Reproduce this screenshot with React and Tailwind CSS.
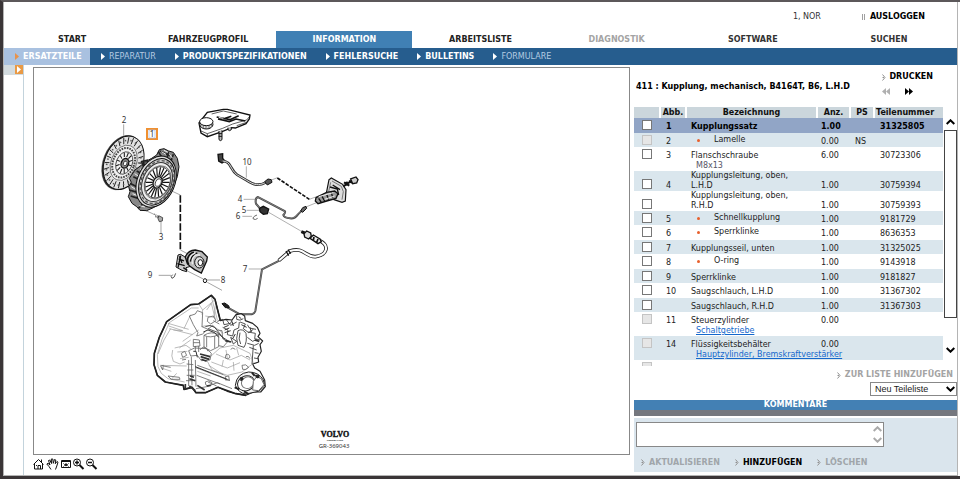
import React from "react";

const TABS = [
  { name: "START", style: "text-[#222222]" },
  { name: "FAHRZEUGPROFIL", style: "text-[#222222]" },
  { name: "INFORMATION", style: "bg-[#4080b4] text-white" },
  { name: "ARBEITSLISTE", style: "text-[#222222]" },
  { name: "DIAGNOSTIK", style: "text-[#a4a4a4]" },
  { name: "SOFTWARE", style: "text-[#333333]" },
  { name: "SUCHEN", style: "text-[#333333]" },
];

const SUBNAV = [
  { name: "REPARATUR", style: "font-normal text-[#b4cbe2]" },
  { name: "PRODUKTSPEZIFIKATIONEN", style: "font-bold text-white" },
  { name: "FEHLERSUCHE", style: "font-bold text-white" },
  { name: "BULLETINS", style: "font-bold text-white" },
  { name: "FORMULARE", style: "font-normal text-[#b4cbe2]" },
];

const PARTS = [
  { no: "1", name: "Kupplungssatz", qty: "1.00", part: "31325805", selected: true },
  { no: "2", name: "Lamelle", sub: true, qty: "0.00", ps: "NS", disabled: true },
  { no: "3", name: "Flanschschraube", note: "M8x13", qty: "6.00", part: "30723306" },
  { no: "4", name: "Kupplungsleitung, oben, L.H.D", wrap: true, qty: "1.00", part: "30759394" },
  { no: "", name: "Kupplungsleitung, oben, R.H.D", wrap: true, qty: "1.00", part: "30759393" },
  { no: "5", name: "Schnellkupplung", sub: true, qty: "1.00", part: "9181729" },
  { no: "6", name: "Sperrklinke", sub: true, qty: "1.00", part: "8636353" },
  { no: "7", name: "Kupplungsseil, unten", qty: "1.00", part: "31325025" },
  { no: "8", name: "O-ring", sub: true, qty: "1.00", part: "9143918" },
  { no: "9", name: "Sperrklinke", qty: "1.00", part: "9181827" },
  { no: "10", name: "Saugschlauch, L.H.D", qty: "1.00", part: "31367302" },
  { no: "", name: "Saugschlauch, R.H.D", qty: "1.00", part: "31367303" },
  { no: "11", name: "Steuerzylinder", link: "Schaltgetriebe", qty: "0.00", disabled: true },
  { no: "14", name: "Flüssigkeitsbehälter", link: "Hauptzylinder, Bremskraftverstärker", qty: "0.00", disabled: true },
  { no: "", name: "", qty: "", disabled: true },
];

function Triangle({ className }) {
  return (
    <svg className={"h-[7px] w-1 shrink-0 " + className} viewBox="0 0 4 7" fill="currentColor" aria-hidden="true">
      <path d="M0 0L4 3.5L0 7Z" />
    </svg>
  );
}

function Marker() {
  return (
    <svg className="h-[7px] w-1 shrink-0 text-[#909090]" viewBox="0 0 4 7" fill="none" stroke="currentColor" aria-hidden="true">
      <path d="M0.5 0.5L3 3.5L0.5 6.5M0.5 3.5H2" />
    </svg>
  );
}

function Chevron({ up, className }) {
  return (
    <svg className={"h-[6px] w-[9px] " + className} viewBox="0 0 9 6" fill="none" stroke="currentColor" strokeWidth="2" aria-hidden="true">
      <path d={up ? "M0.7 5L4.5 1.3L8.3 5" : "M0.7 1L4.5 4.7L8.3 1"} />
    </svg>
  );
}

function Header() {
  return (
    <header>
      <div className="flex h-[29px] items-center justify-end pr-8">
        <span className="text-[#333333]">1, NOR</span>
        <span className="ml-[41px] h-[6px] w-[3px] border-x border-[#a0a0a0]" />
        <button className="ml-[5px] font-bold text-black">AUSLOGGEN</button>
      </div>
      <nav className="grid h-[17px] grid-cols-7">
        {TABS.map((t) => (
          <a key={t.name} href="#" className={"flex items-center justify-center font-bold " + t.style}>
            {t.name}
          </a>
        ))}
      </nav>
      <nav className="flex h-[17px] items-center gap-[19px] bg-[#265d8e]">
        <a href="#" className="-mr-2 flex h-full w-[86px] items-center gap-1 bg-[#a9c1e0] pl-[11px] font-bold text-white">
          <Triangle className="text-[#e8924a]" />
          ERSATZTEILE
        </a>
        {SUBNAV.map((s) => (
          <a key={s.name} href="#" className={"flex items-center gap-1 " + s.style}>
            <Triangle className="text-white" />
            {s.name}
          </a>
        ))}
      </nav>
    </header>
  );
}

/* Radial strokes between two concentric ellipses. */
function Spokes({ cx, cy, rx, ry, from, to, count, width }) {
  return Array.from({ length: count }, (_, i) => {
    const a = (i / count) * Math.PI * 2;
    const c = Math.cos(a);
    const s = Math.sin(a);
    return (
      <line
        key={i}
        x1={cx + rx * from * c}
        y1={cy + ry * from * s}
        x2={cx + rx * to * c}
        y2={cy + ry * to * s}
        strokeWidth={width}
      />
    );
  });
}

function ClutchDisc() {
  return (
    <g transform="rotate(22 100 203)">
      <ellipse cx="97" cy="204" rx="57" ry="85" fill="#333" />
      <ellipse cx="101" cy="203" rx="57" ry="83" fill="#e2e2e2" strokeWidth="3" />
      <ellipse cx="101" cy="203" rx="38" ry="55" strokeWidth="1.5" fill="#f2f2f2" />
      <Spokes cx={101} cy={203} rx={57} ry={83} from={0.72} to={0.96} count={24} width={2.5} />
      <ellipse cx="101" cy="203" rx="48" ry="70" strokeWidth="5" strokeDasharray="4 12" stroke="#555" />
      <ellipse cx="101" cy="203" rx="32" ry="46" strokeWidth="6" strokeDasharray="5 3" stroke="#444" />
      <ellipse cx="103" cy="203" rx="24" ry="35" strokeWidth="2" />
      <Spokes cx={103} cy={203} rx={24} ry={35} from={0.55} to={0.95} count={12} width={3} />
      <ellipse cx="105" cy="203" rx="11" ry="15" strokeWidth="4" fill="#888" />
      <ellipse cx="106" cy="203" rx="5" ry="7" strokeWidth="2" fill="#fff" />
    </g>
  );
}

function PressurePlate() {
  return (
    <g>
      <path
        d="M170 198L185 190L200 180L208 164L222 161L236 168L250 172L262 190L267 215L262 245L250 275L235 300L212 325L190 338L170 347L150 346L140 335L126 325L115 305L120 290L116 275L124 262L118 250L135 225L155 210Z"
        fill="#888"
        strokeWidth="3"
      />
      <path d="M120 265L140 275M118 285L142 292M122 303L145 310M130 245L150 255M140 228L158 238M160 205L172 218M205 170L215 186M235 170L232 186M250 178L244 196M145 340L160 325M210 168L240 182M155 200L172 196L176 210L160 214Z" strokeWidth="5" stroke="#222" />
      <path d="M124 275L138 284M128 296L142 302M214 170L228 178M238 178L248 190M150 222L162 228M148 332L165 336M134 236L146 244M222 166L234 172" stroke="#eee" strokeWidth="3" />
      <g transform="rotate(24 203 262)">
        <ellipse cx="198" cy="262" rx="56" ry="80" fill="#ddd" strokeWidth="3" />
        <ellipse cx="200" cy="262" rx="50" ry="73" fill="#ccc" strokeWidth="3" />
        <ellipse cx="201" cy="262" rx="47" ry="67" stroke="#555" strokeWidth="4" strokeDasharray="9 6" />
        <ellipse cx="201" cy="262" rx="43" ry="61" fill="#eee" strokeWidth="3" stroke="#333" />
        <ellipse cx="203" cy="262" rx="38" ry="52" strokeWidth="1.5" fill="#fff" />
        <Spokes cx={203} cy={262} rx={34} ry={47} from={0.42} to={1} count={20} width={3.5} />
        <ellipse cx="203" cy="262" rx="36" ry="49" strokeWidth="2" />
        <ellipse cx="203" cy="262" rx="13" ry="18" fill="#ddd" strokeWidth="4" />
        <ellipse cx="205" cy="262" rx="8" ry="12" fill="#fff" strokeWidth="2" />
      </g>
    </g>
  );
}

function Reservoir() {
  return (
    <g strokeWidth="3">
      <path d="M327 84L352 52L400 43L412 43L480 60L478 72L468 86L436 99L425 98L398 109L352 125L333 114Z" fill="#fff" strokeWidth="4" />
      <path d="M333 108L352 116L398 100L428 87L470 75L479 64M352 116V124M365 57L400 48L440 57M440 92L470 82" strokeWidth="2" />
      <ellipse cx="349" cy="88" rx="20" ry="14" fill="#ddd" />
      <ellipse cx="349" cy="80" rx="20" ry="12" fill="#fff" />
      <path d="M333 86V95M340 90V100M348 92V102M357 91V101M365 86V95" strokeWidth="1.5" />
      <path d="M380 66L420 74L446 62M384 72L418 80L438 72L466 78M406 70L424 64" strokeWidth="5" />
      <path d="M386 67L400 70" stroke="#ddd" strokeWidth="3" />
      <path d="M387 108V134Q391 140 396 134V106M386 116H396M386 124H396M414 98V104Q418 110 424 104V96" fill="#bbb" />
    </g>
  );
}

function Gearbox() {
  return (
    <g strokeLinejoin="round">
      {/* housing outline */}
      <path
        d="M80 125L152 74L176 72L214 46L225 58L241 122L258 118L276 120L288 104L304 101L314 108L316 122L338 130L352 142L360 160L354 170L368 183L360 194L364 214L354 232L356 246L338 252L344 264L360 274L374 300L376 320L362 336L340 336L318 346L284 340L262 334L234 322L196 338L168 338L156 322L132 328L130 316L76 306L52 286L42 254L43 220L58 172Z"
        fill="#fff"
        stroke="#222"
        strokeWidth="3.5"
      />
      <path
        d="M241 122L225 58L214 46L176 72L152 74L80 125L58 172L43 220L42 254L52 286L76 306L130 316L132 328L156 322L168 338L196 338L234 322L284 340L318 346"
        stroke="#222"
        strokeWidth="5"
      />
      <g stroke="#999" strokeWidth="2">
        <path d="M88 128L154 84L176 84M88 128L66 178L52 224L54 260L64 280L84 296L134 306M84 130L146 148M88 146L158 164M54 222L72 180L92 146M60 256L140 258M64 264L94 274M100 150L128 152L86 138M92 300L110 280M176 72L188 90L224 60M188 90L186 104M214 50L232 120M222 112L226 76M128 184L176 150M118 204L152 180M152 104L132 146" />
        <path d="M98 210Q92 228 100 244L120 252L134 246M104 204L138 196L152 206M112 216L142 214M120 236L146 232M200 90L214 70L226 118M196 108L222 112M184 140Q210 132 228 144L250 160" />
        <path d="M240 204L280 196L330 220L340 250L306 276L262 286L216 270L200 240ZM214 246L262 264L300 248M228 222L270 240L304 226L330 240M258 210L262 234M290 204L296 226M250 240L246 260M280 246L282 272M206 256L260 290M172 274L212 288" />
      </g>
      <g stroke="#666" strokeWidth="2.5">
        <path d="M148 108L166 102L172 92L188 98L186 140L204 148L218 136L232 150L246 152L248 176L262 186L250 200L232 196M148 108L160 134L174 158L170 168L188 162L196 154M204 112L220 108L228 122L212 132L202 124ZM220 122L238 132" />
        <path d="M192 166V202L212 212L236 200V164Q214 152 192 166ZM192 166Q210 176 236 164M200 170V202M224 168V204" fill="#fff" />
        <path d="M160 178L178 180L180 198L160 200ZM160 188H180M166 198V214M176 198V216M146 212L164 204L200 206L214 220L210 240L184 242L172 226L152 228ZM180 210Q194 190 204 214" />
        <path d="M146 240V318M154 230L156 316M166 240L168 320M140 252L160 254M142 270H160M140 286H164M138 302H160M166 262L270 302M172 256L250 284M170 286L240 312M204 306L230 318M168 326L200 320L232 308L276 326" />
        <path d="M62 258L70 256L68 270ZM70 258L92 262M84 288L118 292L120 298L94 298ZM124 220L134 214L140 226L128 232ZM126 240L138 238" />
        <path d="M196 306Q206 298 216 308Q216 318 204 318Q194 316 196 306ZM258 224Q268 220 270 232Q264 240 256 234ZM306 256Q318 250 326 262Q318 272 308 268ZM256 290L266 288L268 300H256ZM272 208Q278 200 286 208M318 230Q326 226 330 236" />
      </g>
      <g stroke="#333" strokeWidth="3">
        <path d="M166 260L262 298M160 214L168 214L172 232M190 156L204 150L224 158L236 172M254 150L268 144M252 142L266 136M254 158L272 152M296 110L304 116M276 124L280 138M304 134L320 142M330 142L334 156M286 162L278 176" />
        <path d="M196 140Q210 132 224 142L248 172L270 186M204 146L230 156L256 180M232 124L248 118L252 134L272 130L276 120M258 118L272 136L290 126M290 106V118Q300 124 310 116M248 142L264 150L262 164L278 168L282 150L296 144L298 126M300 126L316 132L310 146L326 158L340 148M322 134L328 144L348 148" strokeWidth="2.5" />
        <path d="M294 152Q286 176 294 196L312 202Q322 186 318 160Q308 144 294 152ZM300 158Q294 178 302 192M272 172L290 184L280 192ZM324 156L346 160L344 176L360 180M322 172L338 184L350 178M322 190L344 196L356 190M328 202L350 210M340 196L336 252M344 218L356 220M342 234L354 236" strokeWidth="2.5" />
        <path d="M180 222L210 230M182 230L208 238M184 238L200 244M150 288L162 292M148 296L166 302M136 312V326M148 318L166 332M172 316L194 330M200 318L212 316M256 182L274 186M344 180L358 184" strokeWidth="5" />
      </g>
      {/* output flange */}
      <g stroke="#222" strokeWidth="3">
        <path d="M286 316Q290 280 326 276Q356 276 370 300L374 318L356 334L318 342Q296 340 286 316Z" fill="#f4f4f4" />
        <ellipse cx="318" cy="310" rx="26" ry="22" fill="#fff" transform="rotate(-24 318 310)" />
        <ellipse cx="323" cy="308" rx="19" ry="17" fill="#fff" transform="rotate(-24 323 308)" stroke="#777" />
        <path d="M340 304L350 290L364 296L372 314L356 332L338 330Z" fill="#fff" stroke="#666" />
        <path d="M300 294L310 298M302 302L308 292M346 286L358 292M350 294L356 284M284 322L298 328M312 334L326 342M336 278L344 288" strokeWidth="6" />
      </g>
    </g>
  );
}

const CALLOUTS = [
  ["2", 124, 123],
  ["10", 247, 165],
  ["4", 240, 202],
  ["5", 244, 213],
  ["6", 238, 219],
  ["3", 161, 240],
  ["7", 245, 272],
  ["9", 150, 278],
  ["8", 223, 283],
];

function Diagram() {
  return (
    <svg className="h-full w-full" viewBox="34 68 595 386" fill="none" stroke="#111" strokeLinecap="butt">
      <g transform="translate(90 95) scale(0.33333)">
        <g stroke="#777" strokeWidth="2">
          <path d="M101 88V122M166 346L192 358M213 380V416M245 288L271 300M271 465L292 476M206 541H243M292 528L340 552M350 555H390M352 562L396 586" />
        </g>
        <path d="M271 301V464" strokeWidth="5" strokeDasharray="22 6" />
        <ClutchDisc />
        <PressurePlate />
        <Reservoir />
        <path d="M192 357L207 366M196 364L207 370" strokeWidth="4" stroke="#666" strokeDasharray="3 2" />
        <path d="M206 362L218 368L217 378L208 380L204 371Z" fill="#aaa" strokeWidth="2" />
        <path d="M257 535Q254 549 246 550Q240 544 248 539" strokeWidth="3" stroke="#555" />
        <ellipse cx="345" cy="557" rx="5" ry="6" strokeWidth="3" />
        {/* slave cylinder */}
        <path d="M264 480L272 478L282 484L296 496L302 514L288 518L290 530L276 526L258 516Z" fill="#ccc" strokeWidth="3" />
        <path d="M268 484L276 504M266 492L282 498M262 506L284 512M272 482L264 518M280 518L292 526" strokeWidth="4" />
        <path d="M286 486Q294 466 316 465L336 470L352 486L350 498L334 534L314 524L300 514L292 506Z" fill="#bbb" strokeWidth="4" />
        <path d="M292 492Q298 474 312 472M302 500Q304 478 322 474M296 508Q290 498 294 490" strokeWidth="5" />
        <path d="M298 494Q302 478 316 474M308 508Q302 490 318 480L330 480" stroke="#eee" strokeWidth="4" />
        <ellipse cx="328" cy="502" rx="14" ry="17" fill="#ddd" strokeWidth="3" />
        <ellipse cx="331" cy="503" rx="7" ry="9" fill="#fff" strokeWidth="3" />
        {/* suction hose */}
        <path d="M384 178L398 176L398 190L405 198L396 204L386 198Z" fill="#444" strokeWidth="4" />
        <path d="M398 198C425 200 418 222 442 240L470 256C492 270 505 274 528 262" strokeWidth="8" stroke="#333" />
        <path d="M398 198C425 200 418 222 442 240L470 256C492 270 505 274 528 262" strokeWidth="3" stroke="#ddd" />
        <path d="M524 260L534 252L544 254L546 262L532 270Z" fill="#555" strokeWidth="3" />
      </g>
      <g transform="translate(230 95) scale(0.33333)">
        <g stroke="#888" strokeWidth="2">
          <path d="M49 214V248M41 313H76M50 346H88M37 364H66M56 522H94M116 352L216 410M230 335L262 322M125 255L142 248M238 313L290 294" />
        </g>
        <path d="M142 249L238 313" strokeWidth="5" strokeDasharray="11 4" />
        <path d="M81 360Q66 366 70 372Q76 376 83 370" strokeWidth="3" stroke="#666" />
        {/* pressure pipe */}
        <path d="M88 338L78 326Q74 310 84 306L164 348Q168 352 160 360Q162 368 180 370Q194 372 204 358L216 346" strokeWidth="6" stroke="#444" />
        <path d="M88 338L78 326Q74 310 84 306L164 348Q168 352 160 360Q162 368 180 370Q194 372 204 358L216 346" strokeWidth="2" stroke="#999" />
        <path d="M212 348L218 338L228 334L230 340L218 352Z" fill="#666" strokeWidth="3" />
        <path d="M88 340L100 334L116 342L112 356L100 358L90 350Z" fill="#333" strokeWidth="4" />
        {/* master cylinder */}
        <path d="M297 254L304 249L338 268L348 284L346 318L336 322L312 314L288 300Z" fill="#ddd" strokeWidth="3.5" />
        <path d="M306 258L334 274L340 290L336 314M302 262L296 290" strokeWidth="3" stroke="#777" />
        <path d="M258 308L290 292L314 288L324 296L318 310L290 318L264 326L256 318Z" fill="#999" strokeWidth="4" />
        <path d="M266 310L274 322M276 304L284 318M290 298L296 314M304 292L308 308M300 276L322 282L326 300M308 270L330 284" strokeWidth="4" />
        <path d="M266 305L310 293M284 313L314 303" stroke="#eee" strokeWidth="3" />
        <path d="M340 274L364 258M342 262L358 272M350 260L352 272M358 256L366 264" strokeWidth="6" />
        <path d="M362 252L378 246L384 254L380 264L368 266Z" fill="#ccc" strokeWidth="4" />
        {/* hydraulic hose */}
        <path d="M268 436C300 452 292 480 256 485C225 486 222 455 180 468L146 497" strokeWidth="11" stroke="#222" />
        <path d="M268 436C300 452 292 480 256 485C225 486 222 455 180 468L146 497" strokeWidth="6" stroke="#fff" />
        <path d="M148 497L96 523L82 610L76 648Q72 658 60 658H30L-8 637" strokeWidth="6" stroke="#444" strokeLinejoin="round" />
        <path d="M148 497L96 523L82 610L76 648Q72 658 60 658H30L-8 637" strokeWidth="1.5" stroke="#aaa" strokeLinejoin="round" />
        <path d="M-24 626L-16 624L-4 632L-2 638L-14 638Z" fill="#222" strokeWidth="3" />
        <path d="M214 410L224 414" strokeWidth="9" />
        <path d="M222 416L230 408L242 414L244 424L236 432L224 426Z" fill="#ddd" strokeWidth="4" />
        <path d="M240 430L250 420L270 432L274 440L264 446Z" fill="#eee" strokeWidth="4" />
        <path d="M252 426L250 436M264 432L260 442" strokeWidth="5" />
        <path d="M168 468L176 482M174 464L182 476" strokeWidth="4" />
      </g>
      <g transform="translate(140 280) scale(0.33333)">
        <Gearbox />
      </g>
      <rect x="147" y="129" width="10" height="10" stroke="#f09030" strokeWidth="2" />
      <rect x="149" y="130" width="6" height="8" stroke="#a9b8dd" strokeWidth="0.7" />
      <g stroke="none" fill="#333" textAnchor="middle" fontFamily="'Noto Sans', sans-serif" fontSize="8">
        <text x="152" y="137">1</text>
        {CALLOUTS.map(([label, x, y]) => (
          <text key={label} x={x} y={y}>{label}</text>
        ))}
      </g>
      <g stroke="none" fill="#111" textAnchor="middle">
        <text x="335" y="437" fontFamily="'Liberation Serif', serif" fontWeight="bold" fontSize="8" stroke="#111" strokeWidth="0.4">VOLVO</text>
        <text x="335" y="441" fontFamily="'Liberation Sans', sans-serif" fontWeight="bold" fontSize="2">GENUINE PARTS</text>
        <text x="334" y="448" fontFamily="'Noto Sans', sans-serif" fontSize="6" fill="#333">GR-369043</text>
      </g>
    </svg>
  );
}

function ToolButton({ label, children }) {
  return (
    <button aria-label={label} className="h-3 w-[13px]">
      <svg className="h-3 w-[13px]" viewBox="0 0 13 12" fill="none" stroke="#111" strokeWidth="1">
        {children}
      </svg>
    </button>
  );
}

function Toolbar() {
  return (
    <div className="flex h-5 items-center pb-[3px]">
      <ToolButton label="Start">
        <path d="M0.5 6.5L5.5 1.5L10.5 6.5M1.5 6V11H9.5V6M5 11V7.5H7.5V11M8.5 1.5V4M3 7.5H4" />
      </ToolButton>
      <ToolButton label="Verschieben">
        <path d="M5 11.5L3 8.5L0.8 6L2 5.3L4 7L2.5 2.5L3.8 2L5.5 5.5L5.3 1H6.8L7.3 5.3L8.5 1.5L9.8 2L9.3 5.7L11 3.5L12 4.2L10.8 8L9.5 11.5" />
      </ToolButton>
      <ToolButton label="Einpassen">
        <path d="M2.5 2.5H11.5V9.5H2.5ZM2.5 3.5H11.5M4.5 5.5L5.5 6.5M4.5 8.5L5.5 7.5M9.5 5.5L8.5 6.5M9.5 8.5L8.5 7.5" />
        <circle cx="7" cy="6.8" r="1" fill="#111" />
      </ToolButton>
      <ToolButton label="Vergrößern">
        <circle cx="5" cy="4.5" r="3.5" />
        <path d="M3 4.5H7M5 2.5V6.5" strokeWidth="1.5" />
        <path d="M7.5 7L11.5 11" strokeWidth="2" />
      </ToolButton>
      <ToolButton label="Verkleinern">
        <circle cx="5" cy="4.5" r="3.5" />
        <path d="M3 4.5H7" strokeWidth="1.5" />
        <path d="M7.5 7L11.5 11" strokeWidth="2" />
      </ToolButton>
    </div>
  );
}

function PartRow({ row, index }) {
  const height = row.wrap ? "h-5" : row.note || row.link ? "h-6" : index % 2 ? "h-[14px]" : "h-[15px]";
  const tone = row.selected ? "bg-[#91a5c6] font-bold text-black" : index % 2 ? "bg-[#dae6ed] text-[#222222]" : "bg-white text-[#222222]";
  const top = row.wrap ? "pt-[10px]" : "pt-1";
  return (
    <tr className={height + " align-top " + tone}>
      <td className={"pl-2 " + (row.wrap ? "pt-2" : "pt-[2px]")}>
        <input
          type="checkbox"
          aria-label={row.name || "Teil"}
          disabled={row.disabled}
          className="block h-[10px] w-[10px] appearance-none border border-[#777777] bg-white checked:bg-[#265d8e] disabled:border-[#c4c4c4] disabled:bg-[#e6e6e6]"
        />
      </td>
      <td className={"pl-[5px] " + top}>{row.no}</td>
      <td className={"pl-1 " + (row.sub ? "pt-[2px]" : row.wrap ? "" : "whitespace-nowrap pt-1")}>
        {row.sub ? (
          <span className="flex items-center gap-[14px] pl-[6px]">
            <span className="h-[3px] w-[3px] rounded-full bg-[#e8602c]" />
            {row.name}
          </span>
        ) : (
          <span className="block max-w-[110px]">{row.name}</span>
        )}
        {row.note && <span className="block pl-[5px] text-[#555566]">{row.note}</span>}
        {row.link && (
          <a href="#" className="block pl-[5px] text-[#1468cc] underline">
            {row.link}
          </a>
        )}
      </td>
      <td className={"pl-[3px] " + top}>{row.qty}</td>
      <td className={"pl-1 " + top}>{row.ps}</td>
      <td className={"pl-[5px] " + top}>{row.part}</td>
    </tr>
  );
}

function PartsTable() {
  const th = "border-r-2 border-white bg-[#cbd6dc] p-0 font-bold text-[#111111]";
  return (
    <div className="flex h-[259px]">
      <div className="min-w-0 flex-1 overflow-hidden">
        <table className="w-full table-fixed border-separate border-spacing-0 leading-[10px] [&_td]:pr-0 [&_td]:pb-0">
          <thead>
            <tr className="h-[11px]">
              <th className={th + " w-[27px]"} />
              <th className={th + " w-[26px]"}>Abb.</th>
              <th className={th + " w-[131px]"}>Bezeichnung</th>
              <th className={th + " w-[33px]"}>Anz.</th>
              <th className={th + " w-6"}>PS</th>
              <th className="bg-[#cbd6dc] p-0 pl-px text-left font-bold text-[#111111]">Teilenummer</th>
            </tr>
          </thead>
          <tbody>
            {PARTS.map((row, i) => (
              <PartRow key={i} row={row} index={i} />
            ))}
          </tbody>
        </table>
      </div>
      <div className="flex w-[14px] flex-col items-center pt-3">
        <Chevron up className="text-black" />
        <div className="mt-[5px] h-[188px] w-[13px] border border-[#444444] bg-white" />
        <Chevron className="mt-[29px] text-black" />
      </div>
    </div>
  );
}

function Comments() {
  return (
    <section>
      <h2 className="mt-1 h-4 border-b-[6px] border-[#74777e] bg-[#4380b4] text-center leading-[10px] font-bold text-white">KOMMENTARE</h2>
      <div className="mt-[2px] bg-[#dae5ed] pt-1 pb-1 pl-[2px]">
        <div className="flex h-[25px] w-[248px] border border-[#888888] bg-white">
          <textarea aria-label="Kommentar" className="block min-w-0 flex-1 resize-none overflow-hidden px-1 outline-none" />
          <div className="flex w-3 flex-col items-center justify-between py-[3px] text-[#aaaaaa]">
            <Chevron up className="" />
            <Chevron className="" />
          </div>
        </div>
        <div className="mt-[10px] flex h-[11px] items-center gap-[15px] pl-[5px] font-bold text-[#a0a5aa]">
          <button className="flex items-center gap-1"><Marker />AKTUALISIEREN</button>
          <button className="flex items-center gap-1 text-black"><Marker />HINZUFÜGEN</button>
          <button className="flex items-center gap-1"><Marker />LÖSCHEN</button>
        </div>
      </div>
    </section>
  );
}

function SidePanel() {
  return (
    <aside className="ml-1 w-[323px] shrink-0">
      <div className="flex h-[42px] justify-between pr-6 pl-[2px]">
        <h1 className="pt-4 leading-3 font-bold whitespace-nowrap text-black">411 : Kupplung, mechanisch, B4164T, B6, L.H.D</h1>
        <div className="pt-[6px]">
          <button className="flex h-3 items-center gap-[3px] font-bold text-black"><Marker />DRUCKEN</button>
          <div className="mt-[5px] flex gap-[15px]">
            <button aria-label="Zurück" className="flex rotate-180 text-[#b0b0b0]"><Triangle className="" /><Triangle className="" /></button>
            <button aria-label="Weiter" className="flex text-black"><Triangle className="" /><Triangle className="" /></button>
          </div>
        </div>
      </div>
      <PartsTable />
      <div className="flex flex-col items-end pt-[3px]">
        <button className="mr-1 flex h-3 items-center gap-1 font-bold text-[#a4a4a4]"><Marker />ZUR LISTE HINZUFÜGEN</button>
        <div className="mt-px grid w-[87px] items-center">
          <select aria-label="Teileliste" className="col-start-1 row-start-1 h-[14px] w-full appearance-none border border-[#888888] bg-white pl-1 font-['Liberation_Sans',Arial,sans-serif] text-[9px] leading-3 text-[#222222]">
            <option>Neu Teileliste</option>
          </select>
          <Chevron className="pointer-events-none col-start-1 row-start-1 mr-[2px] justify-self-end text-black" />
        </div>
      </div>
      <Comments />
    </aside>
  );
}

export default function App() {
  return (
    <div className="flex min-h-screen flex-col border-t-2 border-b-[3px] border-l-[3px] border-t-[#5c585a] border-b-[#3a3537] border-l-[#3a3537] bg-white pr-[2px] font-['DejaVu_Sans',Verdana,sans-serif] text-[8px] leading-3">
      <div className="flex flex-1 flex-col border-x border-b border-[#b4b4b4]">
        <Header />
        <main className="flex flex-1">
          <div className="flex w-5 shrink-0 flex-col items-end border-r border-[#c3d3dc]">
            <div className="flex h-[10px] w-full justify-end bg-[#d3dbdf]">
              <button aria-label="Einblenden" className="flex h-[9px] w-2 items-center justify-center bg-[#ea9a45] text-white"><Triangle className="" /></button>
            </div>
          </div>
          <div className="ml-[9px] flex min-w-0 flex-1 flex-col pt-[2px]">
            <div className="min-h-[388px] flex-1 border border-[#888888]">
              <Diagram />
            </div>
            <Toolbar />
          </div>
          <SidePanel />
        </main>
      </div>
    </div>
  );
}
